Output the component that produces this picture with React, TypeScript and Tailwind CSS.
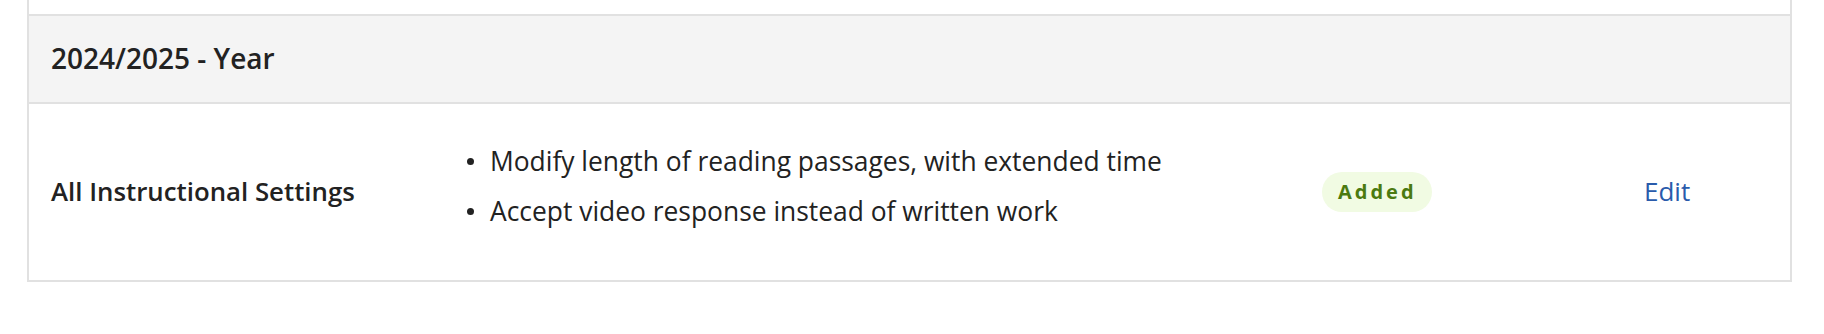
import React from "react";

const items = [
  "Modify length of reading passages, with extended time",
  "Accept video response instead of written work",
];

export default function App() {
  return (
    <div className="w-[1824px] h-[334px] bg-white text-[#222222]" style={{ fontFamily: '"Open Sans", "Liberation Sans", sans-serif' }}>
      <div className="ml-[27px] w-[1765px] border-x-2 border-b-2 border-[#e1e1e1]">
        <div className="h-[14px]" />
        <div className="h-[90px] border-y-2 border-[#e1e1e1] bg-[#f4f4f4] flex items-center px-[22px] pb-[3px]">
          <span className="text-[28px] font-semibold leading-none">2024/2025 - Year</span>
        </div>
        <div className="h-[176px] grid grid-cols-[416px_855px_322px_1fr] items-center px-[22px]">
          <div className="text-[25.8px] font-semibold pb-[2px]">All Instructional Settings</div>
          <ul className="flex flex-col gap-[14px] pb-[12px]">
            {items.map((t) => (
              <li key={t} className="flex items-center gap-[16px] text-[26.4px] leading-[36px]">
                <span className="w-[7px] h-[7px] rounded-full bg-[#222222] shrink-0" />
                <span>{t}</span>
              </li>
            ))}
          </ul>
          <div>
            <span className="inline-flex items-center h-[40px] pl-[16px] pr-[15px] rounded-full bg-[#f1fbe3] text-[#4b7a10] text-[20px] font-bold tracking-[0.15em]">
              Added
            </span>
          </div>
          <div className="pb-[2px]">
            <a className="text-[26px] text-[#2a5bab]">Edit</a>
          </div>
        </div>
      </div>
    </div>
  );
}
